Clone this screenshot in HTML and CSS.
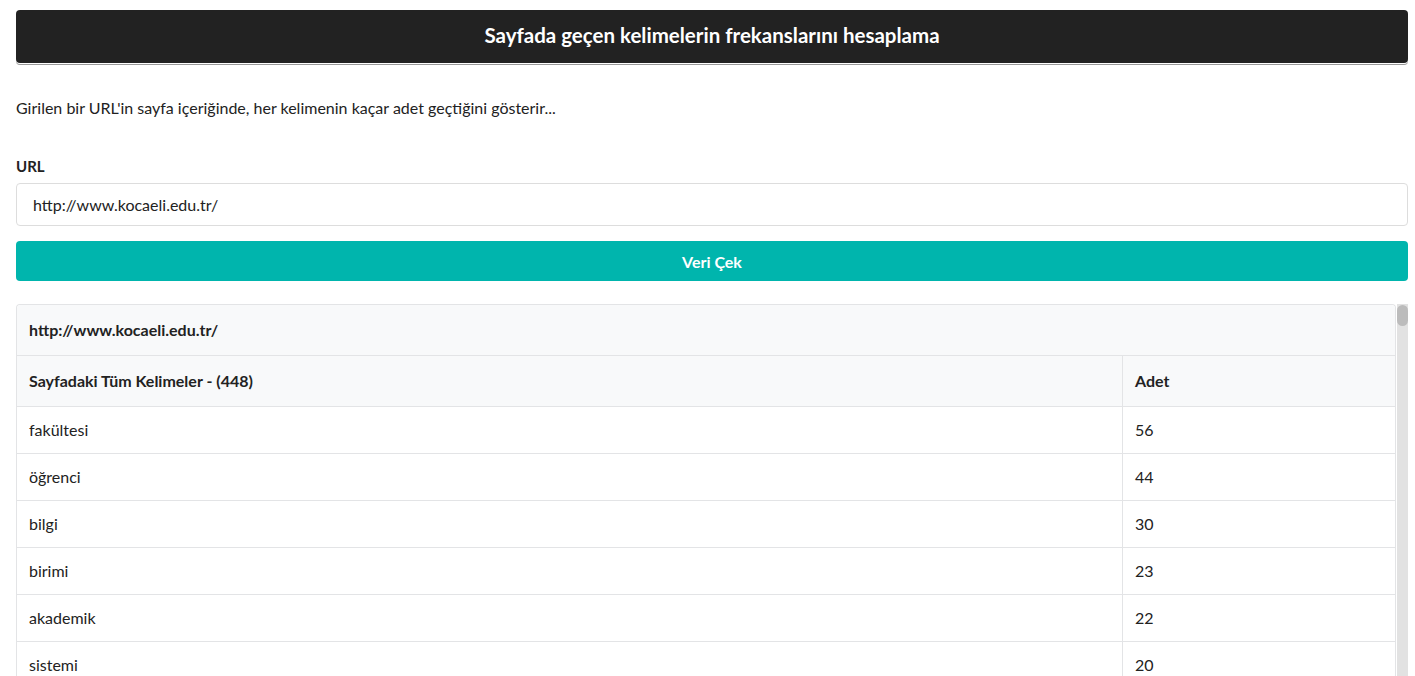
FILE: index.html
```html
<!DOCTYPE html>
<html lang="tr">
<head>
<meta charset="utf-8">
<title>Kelime Frekansı</title>
<link rel="stylesheet" href="styles.css">
</head>
<body>
<div class="container">
  <div class="title-bar"><h1>Sayfada geçen kelimelerin frekanslarını hesaplama</h1></div>
  <p class="desc">Girilen bir URL'in sayfa içeriğinde, her kelimenin kaçar adet geçtiğini gösterir...</p>
  <form class="form">
    <label class="label" for="url">URL</label>
    <input class="input" id="url" type="text" value="http://www.kocaeli.edu.tr/">
    <button class="btn" type="button">Veri Çek</button>
  </form>
  <div class="results">
    <table class="tbl">
      <thead>
        <tr><th colspan="2" class="site">http://www.kocaeli.edu.tr/</th></tr>
        <tr><th class="c1">Sayfadaki Tüm Kelimeler - (448)</th><th class="c2">Adet</th></tr>
      </thead>
      <tbody>
        <tr><td>fakültesi</td><td>56</td></tr>
        <tr><td>öğrenci</td><td>44</td></tr>
        <tr><td>bilgi</td><td>30</td></tr>
        <tr><td>birimi</td><td>23</td></tr>
        <tr><td>akademik</td><td>22</td></tr>
        <tr><td>sistemi</td><td>20</td></tr>
      </tbody>
    </table>
    <div class="track"><div class="thumb"></div></div>
  </div>
</div>
</body>
</html>
```
FILE: styles.css
```css
html { overflow: hidden; }
body {
  margin: 0;
  font-family: Lato, "Noto Sans", sans-serif;
  font-size: 16px;
  color: #222;
  background: #fff;
}
.container {
  margin: 10px 0 0 16px;
  width: 1392px;
}
.title-bar {
  background: #222;
  border-radius: 4px;
  height: 53px;
  box-sizing: border-box;
  padding-bottom: 3px;
  display: flex;
  align-items: center;
  justify-content: center;
  box-shadow: 0 1px 0 #fff, 0 2px 0 #999;
}
.title-bar h1 {
  margin: 0;
  color: #fff;
  font-size: 20.5px;
  font-weight: 700;
}
.desc {
  margin: 35px 0 0;
  font-size: 16px;
  line-height: 20px;
  color: #222;
}
.form {
  display: flex;
  flex-direction: column;
  margin-top: 38px;
}
.label {
  font-weight: 700;
  font-size: 15px;
  line-height: 20px;
  color: #222;
}
.input {
  margin-top: 7px;
  height: 43px;
  box-sizing: border-box;
  border: 1px solid #ddd;
  border-radius: 4px;
  padding: 0 16px;
  font-family: inherit;
  font-size: 16px;
  color: #222;
  outline: none;
}
.btn {
  margin-top: 15px;
  height: 40px;
  border: none;
  border-radius: 4px;
  background: #00b5ad;
  color: #fff;
  font-family: inherit;
  font-weight: 700;
  font-size: 16px;
}
.results {
  margin-top: 23px;
  display: flex;
  align-items: stretch;
}
.tbl {
  flex: 1;
  border-collapse: separate;
  border-spacing: 0;
  border: 1px solid #e3e4e6;
  border-bottom: none;
  border-radius: 4px 4px 0 0;
  font-size: 16px;
  color: #222;
}
.tbl th, .tbl td {
  text-align: left;
  padding: 0 12px 2px;
  border-top: 1px solid #e3e4e6;
}
.tbl th {
  background: #f8f9fa;
  font-weight: 700;
  height: 48px;
}
.tbl th.site { border-top: none; border-radius: 4px 4px 0 0; }
.tbl td { height: 44px; }
.tbl .c2, .tbl td:nth-child(2) {
  width: 248px;
  border-left: 1px solid #e3e4e6;
}
.track {
  width: 11px;
  margin-left: 1px;
  background: #e2e2e2;
}
.thumb {
  height: 21px;
  margin-top: 1px;
  background: #bcbcbc;
  border-radius: 6px;
}
```
